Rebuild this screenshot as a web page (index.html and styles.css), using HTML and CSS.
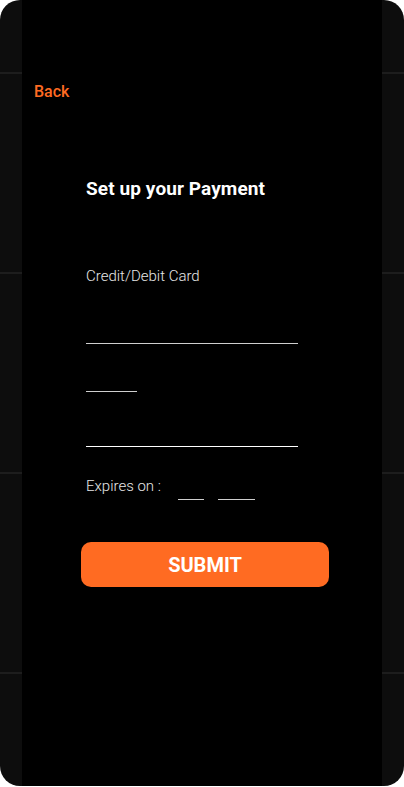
FILE: index.html
```html
<!DOCTYPE html>
<html lang="en">
<head>
<meta charset="utf-8">
<title>Set up your Payment</title>
<link rel="stylesheet" href="styles.css">
</head>
<body>
<div class="phone">
  <main class="screen">
    <a class="back" href="#">Back</a>
    <section class="form">
      <h1 class="title">Set up your Payment</h1>
      <p class="label">Credit/Debit Card</p>
      <input class="field field-wide field-card" type="text" aria-label="Card number">
      <input class="field field-short" type="text" aria-label="CVV">
      <input class="field field-wide field-name" type="text" aria-label="Name on card">
      <div class="expiry">
        <span class="label expiry-label">Expires on :</span>
        <input class="field field-month" type="text" aria-label="Month">
        <input class="field field-year" type="text" aria-label="Year">
      </div>
      <button class="submit" type="button">SUBMIT</button>
    </section>
  </main>
</div>
</body>
</html>
```

FILE: styles.css
```css
html, body {
  margin: 0;
  padding: 0;
  background: #ffffff;
}

.phone {
  width: 404px;
  height: 786px;
  border-radius: 20px;
  overflow: hidden;
  background: repeating-linear-gradient(
    to bottom,
    #0d0d0d 0px,
    #0d0d0d 72px,
    #1d1d1d 72px,
    #1d1d1d 74px,
    #0d0d0d 74px,
    #0d0d0d 200px
  );
  font-family: Roboto, "Liberation Sans", Arial, sans-serif;
}

.screen {
  margin: 0 22px;
  height: 100%;
  background: #000000;
  padding-top: 82px;
  box-sizing: border-box;
  display: flex;
  flex-direction: column;
}

.back {
  display: block;
  margin-left: 12px;
  font-size: 16px;
  font-weight: 500;
  line-height: 20px;
  color: #ff6b22;
  text-decoration: none;
  align-self: flex-start;
}

.form {
  display: flex;
  flex-direction: column;
  align-items: flex-start;
  padding-left: 64px;
}

.title {
  margin: 76px 0 0;
  font-size: 19px;
  font-weight: 700;
  line-height: 22px;
  color: #ffffff;
  letter-spacing: 0.1px;
}

.label {
  margin: 67px 0 0;
  font-size: 15px;
  font-weight: 300;
  line-height: 18px;
  color: #e6e6e6;
}

.field {
  display: block;
  box-sizing: border-box;
  height: 30px;
  padding: 0;
  margin: 0;
  background: transparent;
  border: none;
  border-bottom: 1px solid #cfcfcf;
  color: #ffffff;
  font-family: inherit;
  font-size: 15px;
  outline: none;
}

.field-wide {
  width: 212px;
}

.field-card {
  margin-top: 29px;
}

.field-short {
  width: 51px;
  margin-top: 18px;
}

.field-name {
  margin-top: 25px;
  border-bottom-color: #ffffff;
}

.expiry {
  display: flex;
  align-items: flex-start;
  margin-top: 30px;
}

.expiry-label {
  margin: 0;
}

.field-month,
.field-year {
  height: 23px;
}

.field-month {
  width: 26px;
  margin-left: 17px;
}

.field-year {
  width: 37px;
  margin-left: 14px;
}

.submit {
  margin: 42px 0 0 -5px;
  width: 248px;
  height: 45px;
  border: none;
  border-radius: 10px;
  background: #ff6b22;
  color: #ffffff;
  font-family: inherit;
  font-size: 20px;
  font-weight: 700;
  line-height: 24px;
  padding: 0;
  cursor: pointer;
}
```
